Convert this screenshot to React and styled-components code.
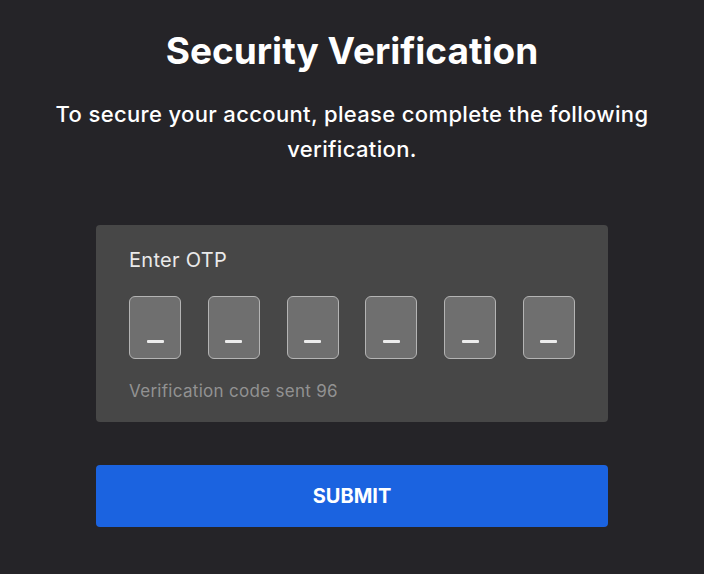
import React from "react";
import styled, { createGlobalStyle } from "styled-components";

const Global = createGlobalStyle`
  html, body { margin: 0; padding: 0; background: #252428; }
  body { font-family: "Inter", "Lato", sans-serif; color: #fff; }
`;

const Page = styled.div`
  width: 704px;
  height: 574px;
  box-sizing: border-box;
  padding: 26px 96px 0;
  display: flex;
  flex-direction: column;
  align-items: stretch;
`;

const Title = styled.h1`
  margin: 0;
  text-align: center;
  font-size: 37px;
  line-height: 50px;
  font-weight: 700;
  color: #fff;
`;

const Subtitle = styled.p`
  margin: 21px -60px 0;
  text-align: center;
  font-size: 22px;
  line-height: 35px;
  letter-spacing: 0.35px;
  font-weight: 500;
  color: #fff;
`;

const Card = styled.div`
  margin-top: 58px;
  background: #474747;
  border-radius: 4px;
  padding: 22px 33px 20px;
  display: flex;
  flex-direction: column;
`;

const Label = styled.div`
  font-size: 20px;
  line-height: 26px;
  letter-spacing: 0.3px;
  color: #eaeaea;
`;

const Boxes = styled.div`
  margin-top: 23px;
  display: flex;
  justify-content: space-between;
`;

const Box = styled.div`
  width: 52px;
  height: 63px;
  box-sizing: border-box;
  border: 1px solid #b4b4b4;
  border-radius: 6px;
  background: #6f6f6f;
  display: flex;
  align-items: flex-end;
  justify-content: center;
  padding-bottom: 15px;
`;

const Dash = styled.span`
  width: 17px;
  height: 3px;
  background: #ececec;
  border-radius: 1px;
`;

const Hint = styled.div`
  margin-top: 21px;
  font-size: 17px;
  line-height: 22px;
  letter-spacing: 0.3px;
  color: #929292;
`;

const Submit = styled.button`
  margin-top: 43px;
  height: 62px;
  border: none;
  border-radius: 4px;
  background: #1b63e0;
  color: #fff;
  font-family: "Inter", "Lato", sans-serif;
  font-size: 20px;
  font-weight: 700;
  cursor: pointer;
`;

export default function App() {
  return (
    <>
      <Global />
      <Page>
        <Title>Security Verification</Title>
        <Subtitle>
          To secure your account, please complete the following verification.
        </Subtitle>
        <Card>
          <Label>Enter OTP</Label>
          <Boxes>
            {[0, 1, 2, 3, 4, 5].map((i) => (
              <Box key={i}>
                <Dash />
              </Box>
            ))}
          </Boxes>
          <Hint>Verification code sent 96</Hint>
        </Card>
        <Submit>SUBMIT</Submit>
      </Page>
    </>
  );
}
